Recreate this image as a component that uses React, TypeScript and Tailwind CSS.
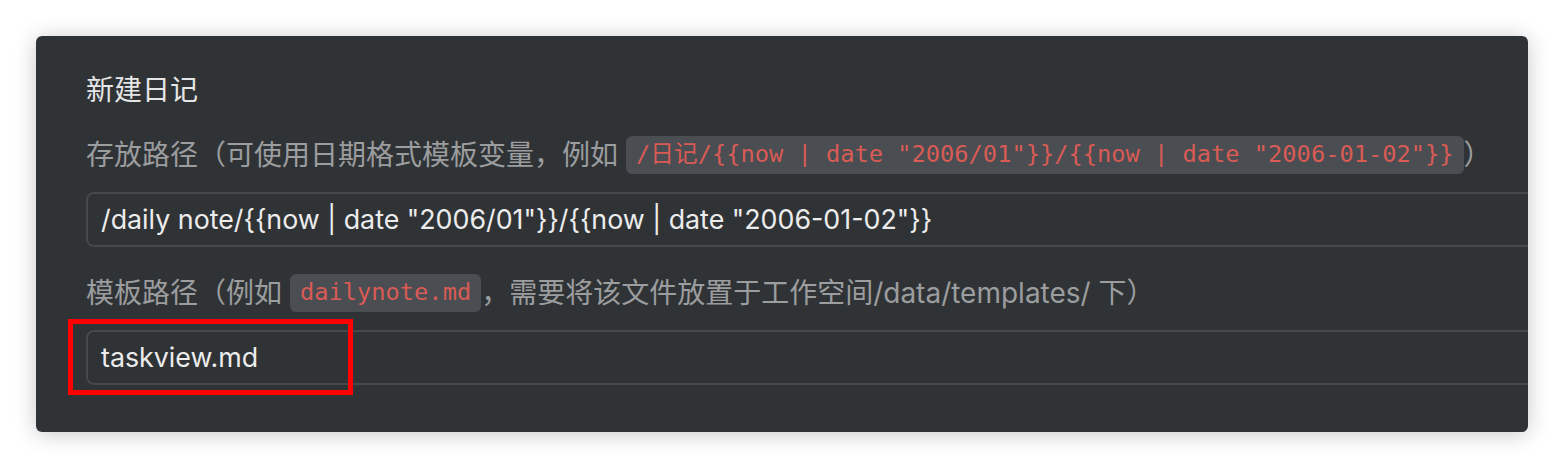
import React from "react";

const sans = "font-['Inter','Noto_Sans_CJK_SC',sans-serif]";
const mono = "font-['DejaVu_Sans_Mono','Noto_Sans_CJK_SC',monospace]";

function Code({ children }: { children: React.ReactNode }) {
  return (
    <span
      className={`inline-flex items-center h-[38px] px-[10px] ml-[8px] rounded-[6px] bg-[#4a4d51] text-[#d95b55] text-[23.7px] ${mono}`}
    >
      {children}
    </span>
  );
}

function Field({ value }: { value: string }) {
  return (
    <div className="w-[1500px] h-[55px] flex items-center px-[13px] rounded-[8px] border-2 border-[#46494c] bg-[#303336] text-[#ececec] text-[26.8px]">
      {value}
    </div>
  );
}

export default function App() {
  return (
    <div className={`w-[1564px] h-[468px] bg-white pt-[36px] pl-[36px] ${sans}`}>
      <div className="w-[1492px] h-[396px] rounded-[6px] bg-[#303336] overflow-hidden shadow-[0_2px_22px_rgba(0,0,0,0.22)] pl-[50px] pt-[34px]">
        <h3 className="h-[40px] flex items-center text-[28px] text-[#e6e6e6]">
          新建日记
        </h3>

        <p className="mt-[25px] h-[40px] flex items-center text-[28px] text-[#9b9d9f] whitespace-nowrap">
          存放路径（可使用日期格式模板变量，例如
          <Code>{'/日记/{{now | date "2006/01"}}/{{now | date "2006-01-02"}}'}</Code>
          ）
        </p>
        <div className="mt-[17px]">
          <Field value={'/daily note/{{now | date "2006/01"}}/{{now | date "2006-01-02"}}'} />
        </div>

        <p className="mt-[26px] h-[40px] flex items-center text-[28px] text-[#9b9d9f] whitespace-nowrap">
          模板路径（例如
          <Code>dailynote.md</Code>
          ，需要将该文件放置于工作空间/data/templates/ 下）
        </p>
        <div className="mt-[17px] relative">
          <Field value="taskview.md" />
          <div className="absolute left-[-18px] top-[-11px] w-[285px] h-[76px] border-[5px] border-[#ff0000]" />
        </div>
      </div>
    </div>
  );
}
